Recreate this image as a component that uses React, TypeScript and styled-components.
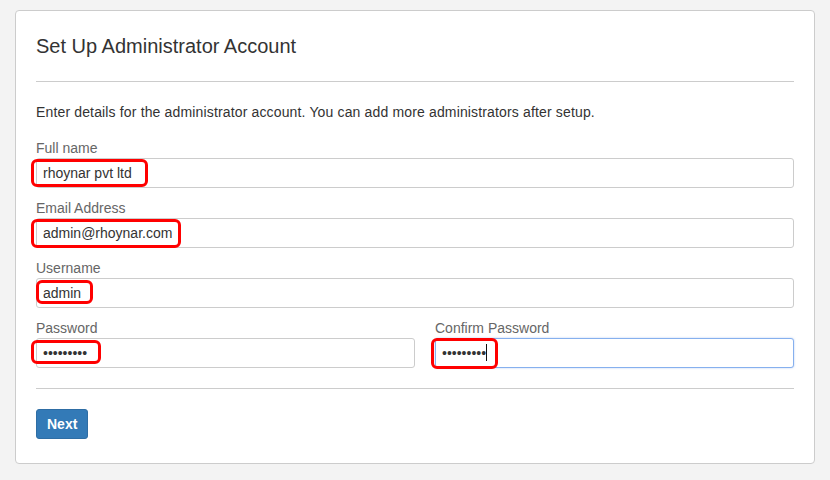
import styled, { createGlobalStyle } from 'styled-components';

const GlobalStyle = createGlobalStyle`
  html, body {
    margin: 0;
    padding: 0;
    background: #f3f3f3;
    font-family: "Liberation Sans", Arial, sans-serif;
  }
`;

interface Mark {
  x: number;
  y: number;
  w: number;
  h: number;
}

interface Field {
  label: string;
  value: string;
  type?: string;
  mark: Mark;
  focused?: boolean;
}

const topFields: Field[] = [
  { label: "Full name", value: "rhoynar pvt ltd", mark: { x: -5, y: 1, w: 117, h: 28 } },
  { label: "Email Address", value: "admin@rhoynar.com", mark: { x: -5, y: 1, w: 150, h: 29 } },
  { label: "Username", value: "admin", mark: { x: 0, y: 2, w: 57, h: 24 } },
];

const passwordFields: Field[] = [
  { label: "Password", value: "123456789", type: "password", mark: { x: -5, y: 2, w: 70, h: 24 } },
  { label: "Confirm Password", value: "123456789", type: "password", mark: { x: -4, y: 0, w: 67, h: 31 }, focused: true },
];

const FormField = ({ field }: { field: Field }) => (
  <Group>
    <Label>{field.label}</Label>
    <InputWrap>
      <Input type={field.type || "text"} defaultValue={field.value} readOnly $focused={field.focused} />
      {field.focused && <Caret />}
      <Highlight $x={field.mark.x} $y={field.mark.y} $w={field.mark.w} $h={field.mark.h} />
    </InputWrap>
  </Group>
);

export default function App() {
  return (
    <Page>
      <GlobalStyle />
      <Card>
        <Title>Set Up Administrator Account</Title>
        <Rule />
        <Intro>Enter details for the administrator account. You can add more administrators after setup.</Intro>
        {topFields.map(f => <FormField key={f.label} field={f} />)}
        <PasswordRow>
          {passwordFields.map(f => <FormField key={f.label} field={f} />)}
        </PasswordRow>
        <Rule $bottom />
        <NextButton type="button">Next</NextButton>
      </Card>
    </Page>
  );
}

const Page = styled.div`
  padding: 10px 15px 16px 15px;
  background: #f3f3f3;
`;

const Card = styled.div`
  width: 800px;
  box-sizing: border-box;
  background: #fff;
  border: 1px solid #ccc;
  border-radius: 4px;
  padding: 22px 20px 24px 20px;
`;

const Title = styled.h2`
  margin: 0;
  font-size: 20px;
  font-weight: normal;
  line-height: 26px;
  color: #333;
`;

const Rule = styled.hr<{ $bottom?: boolean }>`
  border: 0;
  border-top: 1px solid #ccc;
  margin: ${p => (p.$bottom ? '10px 0 20px' : '22px 0 20px')};
`;

const Intro = styled.p`
  margin: 0 0 16px;
  font-size: 14px;
  letter-spacing: 0.15px;
  line-height: 20px;
  color: #333;
`;

const Group = styled.div`
  margin-bottom: 10px;
`;

const Label = styled.label`
  display: block;
  font-size: 14px;
  line-height: 20px;
  color: #666;
`;

const InputWrap = styled.div`
  position: relative;
`;

const Input = styled.input<{ $focused?: boolean }>`
  display: block;
  width: 100%;
  box-sizing: border-box;
  height: 30px;
  padding: 4px 6px;
  font-family: "Liberation Sans", Arial, sans-serif;
  font-size: 14px;
  color: #333;
  background: #fff;
  border: 1px solid ${p => (p.$focused ? '#86b0ee' : '#ccc')};
  border-radius: 3px;
  box-shadow: ${p => (p.$focused ? '0 0 2px rgba(102, 150, 233, 0.5)' : 'none')};
  outline: none;
  caret-color: transparent;
`;

const Caret = styled.span`
  position: absolute;
  left: 51px;
  top: 6px;
  width: 1px;
  height: 17px;
  background: #111;
`;

const Highlight = styled.span<{ $x: number; $y: number; $w: number; $h: number }>`
  position: absolute;
  left: ${p => p.$x}px;
  top: ${p => p.$y}px;
  width: ${p => p.$w}px;
  height: ${p => p.$h}px;
  box-sizing: border-box;
  border: 3px solid #f00;
  border-radius: 6px;
  pointer-events: none;
`;

const PasswordRow = styled.div`
  display: grid;
  grid-template-columns: 379px 1fr;
  column-gap: 20px;
`;

const NextButton = styled.button`
  display: block;
  height: 30px;
  padding: 0 10px;
  font-family: "Liberation Sans", Arial, sans-serif;
  font-size: 14px;
  font-weight: bold;
  color: #fff;
  background: #337ab7;
  border: 1px solid #2e6da4;
  border-radius: 3px;
`;
